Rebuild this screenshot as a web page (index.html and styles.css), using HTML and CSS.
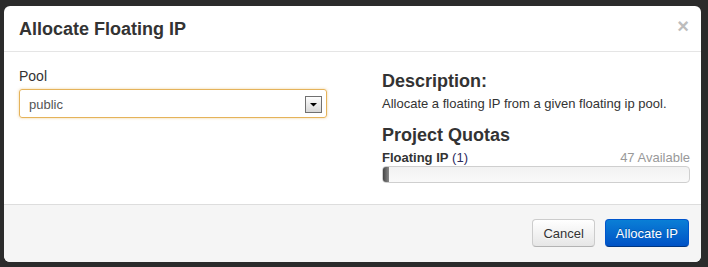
FILE: index.html
```html
<!DOCTYPE html>
<html lang="en">
<head>
	<meta charset="UTF-8">
	<title>Allocate Floating IP</title>
	<link rel="stylesheet" href="styles.css">
</head>
<body>
	<div class="modal">
		<div class="modal-header">
			<h3>Allocate Floating IP</h3>
			<span class="close">&times;</span>
		</div>
		<div class="modal-body">
			<div class="left">
				<label class="field-label">Pool</label>
				<div class="select-box">
					<span>public</span>
					<svg class="select-arrow" width="17" height="17" viewBox="0 0 17 17">
						<defs>
							<linearGradient id="arrowbg" x1="0" y1="0" x2="0" y2="1">
								<stop offset="0" stop-color="#ffffff"/>
								<stop offset="1" stop-color="#d6d6d6"/>
							</linearGradient>
						</defs>
						<rect x="0.5" y="0.5" width="16" height="16" fill="url(#arrowbg)" stroke="#707070"/>
						<polygon points="5,7 12,7 8.5,10.5" fill="#000"/>
					</svg>
				</div>
			</div>
			<div class="right">
				<h3 class="section-title">Description:</h3>
				<p class="description">Allocate a floating IP from a given floating ip pool.</p>
				<h3 class="section-title">Project Quotas</h3>
				<div class="quota-label">
					<span><strong>Floating IP</strong> <span class="quota-used">(1)</span></span>
					<span class="quota-avail">47 Available</span>
				</div>
				<div class="progress">
					<div class="progress-fill" style="width: 6px"></div>
				</div>
			</div>
		</div>
		<div class="modal-footer">
			<button class="btn">Cancel</button>
			<button class="btn btn-primary">Allocate IP</button>
		</div>
	</div>
</body>
</html>
```

FILE: styles.css
```css
body {
	margin: 0;
	background: #2b2b2b;
	font-family: "Liberation Sans", Arial, sans-serif;
	font-size: 13px;
	color: #333;
}
.modal {
	margin: 6px 0 0 4px;
	width: 697px;
	background: #fff;
	border-radius: 6px;
	overflow: hidden;
}
.modal-header {
	display: flex;
	justify-content: space-between;
	padding: 10px 12px 9px 15px;
	border-bottom: 1px solid #e5e5e5;
}
.modal-header h3 {
	margin: 0;
	font-size: 18px;
	line-height: 26px;
	font-weight: bold;
}
.close {
	font-size: 20px;
	font-weight: bold;
	line-height: 20px;
	color: #bdbdbd;
}
.modal-body {
	display: grid;
	grid-template-columns: 308px 308px;
	column-gap: 55px;
	padding: 15px;
}
.field-label {
	display: block;
	font-size: 14px;
	line-height: 18px;
	margin-bottom: 4px;
}
.select-box {
	display: flex;
	align-items: center;
	justify-content: space-between;
	box-sizing: border-box;
	height: 29px;
	padding: 2px 4px 0 9px;
	border: 1px solid #e5b35a;
	border-radius: 3px;
	box-shadow: 0 0 3px rgba(229, 179, 90, 0.6);
	color: #555;
}
.select-arrow {
	display: block;
}
.section-title {
	margin: 0;
	font-size: 18px;
	line-height: 28px;
	font-weight: bold;
}
.description {
	margin: 0 0 8px;
	line-height: 18px;
}
.quota-label {
	display: flex;
	justify-content: space-between;
	line-height: 17px;
}
.quota-used {
	color: #2b2b5e;
}
.quota-avail {
	color: #999;
}
.progress {
	box-sizing: border-box;
	height: 17px;
	margin-bottom: 6px;
	border: 1px solid #cfcfcf;
	border-radius: 4px;
	background: linear-gradient(#f2f2f2, #f9f9f9);
	overflow: hidden;
}
.progress-fill {
	height: 100%;
	background: linear-gradient(to right, #444, #8a8a8a);
}
.modal-footer {
	display: flex;
	justify-content: flex-end;
	gap: 10px;
	padding: 14px 12px 15px;
	background: #f5f5f5;
	border-top: 1px solid #ddd;
}
.btn {
	height: 28px;
	padding: 0 10px;
	font-family: inherit;
	font-size: 13px;
	color: #333;
	border: 1px solid #ccc;
	border-bottom-color: #b3b3b3;
	border-radius: 4px;
	background: linear-gradient(#fff, #e6e6e6);
	text-shadow: 0 1px 1px rgba(255, 255, 255, 0.75);
}
.btn-primary {
	color: #fff;
	border-color: #0055cc #0055cc #003580;
	background: linear-gradient(#0a7fd6, #0052c6);
	text-shadow: 0 -1px 0 rgba(0, 0, 0, 0.25);
}
```
